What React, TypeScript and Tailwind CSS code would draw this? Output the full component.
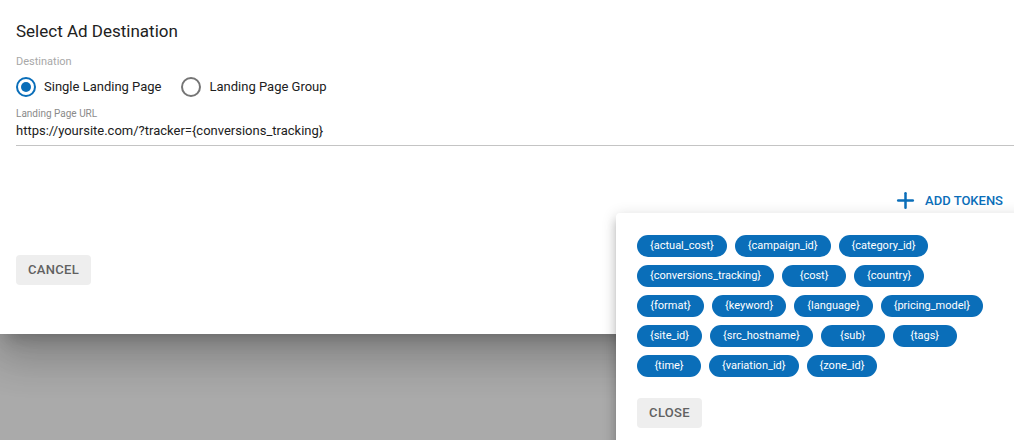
import { Plus } from "lucide-react"

const tokens = [
  ["{actual_cost}", "{campaign_id}", "{category_id}"],
  ["{conversions_tracking}", "{cost}", "{country}"],
  ["{format}", "{keyword}", "{language}", "{pricing_model}"],
  ["{site_id}", "{src_hostname}", "{sub}", "{tags}"],
  ["{time}", "{variation_id}", "{zone_id}"],
]

// chip widths read off the screenshot, short chips get a min width
const widths: Record<string, string> = {
  "{cost}": "w-[64px]",
  "{sub}": "w-[64px]",
  "{tags}": "w-[64px]",
  "{time}": "w-[64px]",
  "{format}": "w-[67px]",
  "{site_id}": "w-[65px]",
}

function Radio({ checked, label }: { checked: boolean; label: string }) {
  return (
    <label className="flex items-center gap-[8px] cursor-pointer">
      <span
        className={`flex items-center justify-center w-[20px] h-[20px] rounded-full border-2 ${
          checked ? "border-[#0a6eb9]" : "border-[#757575]"
        }`}
      >
        {checked && <span className="w-[10px] h-[10px] rounded-full bg-[#0a6eb9]" />}
      </span>
      <span className="text-[13px] text-[#212121]">{label}</span>
    </label>
  )
}

export default function App() {
  return (
    <div className="relative w-[1014px] h-[440px] overflow-hidden bg-[#aaaaaa] font-['Roboto',sans-serif]">
      {/* Dialog */}
      <div className="relative z-10 h-[334px] bg-white pl-4 shadow-[0_11px_15px_-7px_rgba(0,0,0,0.2),0_24px_38px_3px_rgba(0,0,0,0.14),0_9px_46px_8px_rgba(0,0,0,0.12)]">
        <h2 className="pt-[19px] text-[17px] leading-6 text-[#212121]">Select Ad Destination</h2>

        <p className="mt-[11px] text-[11px] leading-4 text-[#a8a8a8]">Destination</p>

        <div className="mt-[7px] flex items-center gap-[20px]">
          <Radio checked label="Single Landing Page" />
          <Radio checked={false} label="Landing Page Group" />
        </div>

        <div className="mt-[11px]">
          <p className="text-[10px] leading-3 text-[#8a8a8a]">Landing Page URL</p>
          <div className="mt-[1px] border-b border-[#c4c4c4] pb-[4px] text-[13px] leading-5 text-[#212121]">
            https://yoursite.com/?tracker={"{conversions_tracking}"}
          </div>
        </div>

        <div className="mt-[42px] flex justify-end pr-[11px]">
          <button className="flex items-center gap-[7px] text-[13px] font-medium text-[#0a6eb9]">
            <Plus className="w-[25px] h-[25px]" strokeWidth={2.4} />
            ADD TOKENS
          </button>
        </div>

        <button className="mt-[42px] h-[30px] w-[75px] rounded bg-[#eeeeee] text-[13px] font-medium tracking-[0.3px] text-[#616161]">
          CANCEL
        </button>
      </div>

      {/* Tokens menu */}
      <div className="absolute left-[616px] top-[213px] z-20 w-[410px] h-[240px] rounded bg-white pl-[21px] pt-[22px] shadow-[0_5px_5px_-3px_rgba(0,0,0,0.2),0_8px_10px_1px_rgba(0,0,0,0.14),0_3px_14px_2px_rgba(0,0,0,0.12)]">
        <div className="flex flex-col gap-[8px]">
          {tokens.map((row, i) => (
            <div key={i} className="flex gap-[8px]">
              {row.map((t) => (
                <span
                  key={t}
                  className={`flex h-[22px] items-center justify-center rounded-full bg-[#0a6eb9] px-[13px] text-[11px] text-white ${
                    widths[t] ?? ""
                  }`}
                >
                  {t}
                </span>
              ))}
            </div>
          ))}
        </div>
        <button className="mt-[21px] h-[30px] w-[65px] rounded bg-[#eeeeee] text-[13px] font-medium tracking-[0.3px] text-[#616161]">
          CLOSE
        </button>
      </div>
    </div>
  )
}
